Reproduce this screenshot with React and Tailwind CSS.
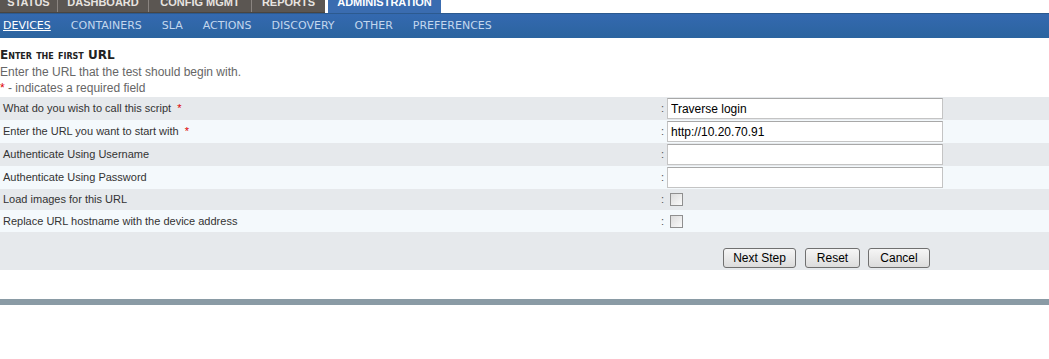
import React from 'react';

const tabs = [
    { name: 'STATUS', w: 'w-[58px]' },
    { name: 'DASHBOARD', w: 'w-[91px]' },
    { name: 'CONFIG MGMT', w: 'w-[103px]' },
    { name: 'REPORTS', w: 'w-[73px]' },
];
const subNav = ['DEVICES', 'CONTAINERS', 'SLA', 'ACTIONS', 'DISCOVERY', 'OTHER', 'PREFERENCES'];

const rows = [
    { label: 'What do you wish to call this script', required: true, type: 'text', value: 'Traverse login', h: 'h-[23px]' },
    { label: 'Enter the URL you want to start with', required: true, type: 'text', value: 'http://10.20.70.91', h: 'h-[23px]' },
    { label: 'Authenticate Using Username', type: 'text', value: '', h: 'h-[23px]' },
    { label: 'Authenticate Using Password', type: 'text', value: '', h: 'h-[23px]' },
    { label: 'Load images for this URL', type: 'check', h: 'h-[21px]' },
    { label: 'Replace URL hostname with the device address', type: 'check', h: 'h-[22px]' },
];

const Button = ({ children, w }) => (
    <button
        className={`${w} h-[20px] rounded-[3px] border border-[#707070] bg-gradient-to-b from-[#f6f6f6] to-[#dcdcdc] text-[12px] text-black`}
    >
        {children}
    </button>
);

const App = () => {
    return (
        <div className="w-[1049px] h-[359px] bg-white overflow-hidden font-['Liberation_Sans',Arial,sans-serif]">
            {/* Top tabs, cut off at the top of the shot */}
            <div className="flex h-[13px] overflow-hidden">
                <div className="flex bg-[#5b5652] border-b border-[#4a4541]">
                    {tabs.map((t, i) => (
                        <div
                            key={t.name}
                            className={`${t.w} text-center ${i < tabs.length - 1 ? 'border-r border-[#8a8480]' : ''} text-[11px] font-bold text-[#e8e4e0] leading-[13px]`}
                        >
                            <div className="mt-[-4px]">{t.name}</div>
                        </div>
                    ))}
                </div>
                <div className="w-[3px] bg-white" />
                <div className="w-[113px] text-center bg-[#3a6cb0] text-[11px] font-bold text-white leading-[13px]">
                    <div className="mt-[-4px]">ADMINISTRATION</div>
                </div>
            </div>

            {/* Sub nav */}
            <div className="h-[25px] flex items-center gap-[20px] px-[3px] bg-gradient-to-b from-[#3469b0] to-[#2b649f] border-t border-[#2c5a8f] font-['DejaVu_Sans',Verdana,sans-serif] text-[11px] text-[#c3d7ee]">
                {subNav.map((n, i) => (
                    <span key={n} className={i === 0 ? 'text-white underline' : ''}>
                        {n}
                    </span>
                ))}
            </div>

            {/* Heading */}
            <div className="pt-[10px]">
                <div className="text-[12px] font-bold text-[#222] leading-[14px] [font-variant:small-caps] font-['DejaVu_Sans',Verdana,sans-serif]">
                    Enter the first URL
                </div>
                <div className="text-[12px] text-[#666] leading-[16px] mt-[2px]">Enter the URL that the test should begin with.</div>
                <div className="text-[12px] text-[#666] leading-[16px]">
                    <span className="text-[#d00]">*</span> - indicates a required field
                </div>
            </div>

            {/* Form rows */}
            <div className="mt-[1px]">
                {rows.map((r, i) => (
                    <div
                        key={r.label}
                        className={`grid grid-cols-[660px_1fr] items-center ${r.h} ${i % 2 === 0 ? 'bg-[#e6e9ec]' : 'bg-[#f4f9fc]'}`}
                    >
                        <div className="pl-[3px] text-[11px] text-[#333]">
                            {r.label}
                            {r.required && <span className="text-[#d00] ml-[6px]">*</span>}
                        </div>
                        <div className="flex items-center text-[11px] text-[#555]">
                            <span className="w-[7px] pl-[1px]">:</span>
                            {r.type === 'text' ? (
                                <input
                                    readOnly
                                    value={r.value}
                                    className="w-[276px] h-[21px] bg-white border border-[#c4c4c4] border-t-[#a8a8a8] px-[3px] text-[12px] text-black outline-none"
                                />
                            ) : (
                                <span className="ml-[3px] w-[13px] h-[13px] border border-[#8f8f8f] bg-gradient-to-br from-[#dcdcdc] to-[#fafafa]" />
                            )}
                        </div>
                    </div>
                ))}
                <div className="h-[38px] bg-[#e6e9ec] flex items-end pb-[2px] pl-[723px]">
                    <Button w="w-[73px]">Next Step</Button>
                    <div className="w-[9px]" />
                    <Button w="w-[55px]">Reset</Button>
                    <div className="w-[8px]" />
                    <Button w="w-[62px]">Cancel</Button>
                </div>
            </div>

            <div className="mt-[29px] h-[6px] bg-[#8a9ba5]" />
        </div>
    );
};

export default App;
